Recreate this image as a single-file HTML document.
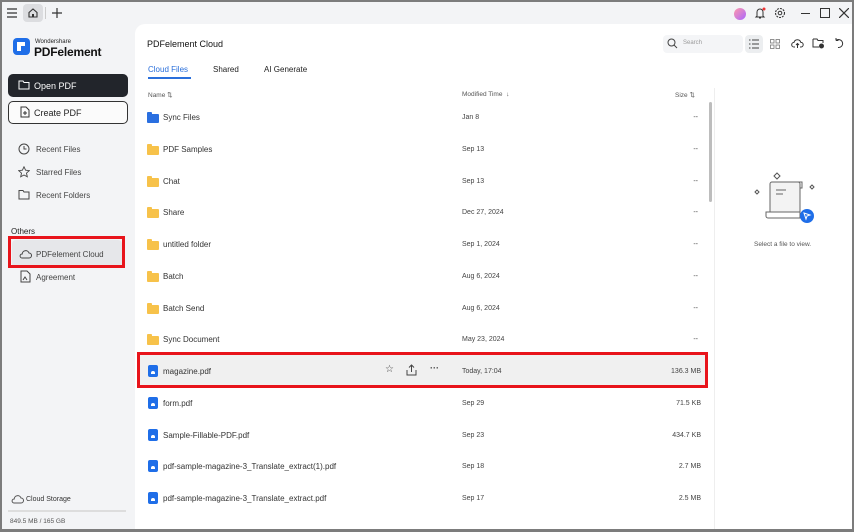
<!DOCTYPE html>
<html><head><meta charset="utf-8"><style>
*{margin:0;padding:0;box-sizing:border-box}
body{width:854px;height:532px;overflow:hidden;background:#7c7c7c;font-family:"Liberation Sans",sans-serif;position:relative}
.win{position:absolute;left:2px;top:2px;width:850px;height:527px;background:#f3f4f6;overflow:hidden}
.a{position:absolute}
.t{font-size:8px;color:#333;white-space:nowrap}
.main{position:absolute;left:133px;top:22px;width:717px;height:505px;background:#fff;border-top-left-radius:10px}
.fold{position:absolute;left:147px;width:12px;height:9px;background:#f7c24a;border-radius:1px}
.fold:before{content:"";position:absolute;left:0;top:-2px;width:5px;height:3px;background:#f7c24a;border-radius:1px 1px 0 0}
.fold.b,.fold.b:before{background:#2a6fe0}
.pdf{position:absolute;left:148px;width:10px;height:12px;background:#1f6ee8;border-radius:2px}
.pdf:after{content:"";position:absolute;left:3px;top:6px;width:4px;height:3px;background:#fff;border-radius:2px 2px 0 0}
.d{position:absolute;left:462px;font-size:7px;color:#444}
.s{position:absolute;right:153px;font-size:7px;color:#444;text-align:right}
.side{font-size:8px;color:#444}
</style></head><body>
<div class="win">
<svg class="a" style="left:4px;top:5px" width="12" height="12" viewBox="0 0 12 12"><path d="M1 2h10M1 6h10M1 10h10" stroke="#333" stroke-width="1.2"/></svg>
<div class="a" style="left:21px;top:2px;width:20px;height:18px;background:#dcdde0;border-radius:4px"></div>
<svg class="a" style="left:25px;top:5px" width="12" height="12" viewBox="0 0 12 12"><path d="M2 5.5L6 2l4 3.5V10H2z" fill="none" stroke="#333" stroke-width="1.1"/><rect x="5" y="7" width="2" height="3" fill="#333"/></svg>
<div class="a" style="left:43px;top:5px;width:1px;height:12px;background:#ccc"></div>
<svg class="a" style="left:49px;top:5px" width="12" height="12"><path d="M6 1v10M1 6h10" stroke="#333" stroke-width="1.2"/></svg>
<div class="a" style="left:732px;top:6px;width:12px;height:12px;border-radius:50%;background:linear-gradient(135deg,#f9a,#a6f)"></div>
<svg class="a" style="left:752px;top:5px" width="12" height="13"><path d="M3 9V5a3 3 0 016 0v4l1 1H2z M5 11h2" fill="none" stroke="#333" stroke-width="1"/><circle cx="10" cy="2" r="1.5" fill="#e33"/></svg>
<svg class="a" style="left:772px;top:5px" width="12" height="12"><circle cx="6" cy="6" r="4.5" fill="none" stroke="#333" stroke-width="1.1" stroke-dasharray="2 1"/><circle cx="6" cy="6" r="1.8" fill="none" stroke="#333"/></svg>
<div class="a" style="left:799px;top:11px;width:9px;height:1px;background:#333"></div>
<div class="a" style="left:818px;top:6px;width:10px;height:10px;border:1.2px solid #333"></div>
<svg class="a" style="left:837px;top:6px" width="10" height="10"><path d="M0 0l10 10M10 0L0 10" stroke="#333" stroke-width="1.2"/></svg>

<div class="a" style="left:11px;top:36px;width:17px;height:17px;background:#1f6ee8;border-radius:4px"></div>
<div class="a" style="left:15px;top:40px;width:8px;height:4px;background:#fff"></div>
<div class="a" style="left:15px;top:44px;width:4px;height:5px;background:#fff"></div>
<div class="a" style="left:33px;top:37px;font-size:6px;color:#222">Wondershare</div>
<div class="a" style="left:32px;top:43px;font-size:12px;color:#111;font-weight:bold;letter-spacing:-.2px">PDFelement</div>
<div class="a" style="left:6px;top:72px;width:120px;height:23px;background:#22252b;border-radius:5px"></div>
<svg class="a" style="left:16px;top:77px" width="12" height="11"><path d="M1 2h4l1 1.5h5V10H1z" fill="none" stroke="#fff" stroke-width="1"/></svg>
<div class="a" style="left:32px;top:79px;font-size:9px;color:#fff">Open PDF</div>
<div class="a" style="left:6px;top:99px;width:120px;height:23px;border:1px solid #333;border-radius:5px;background:#fbfbfb"></div>
<svg class="a" style="left:18px;top:104px" width="10" height="12"><path d="M1 1h5l3 3v7H1z M5 5v4M3 7h4" fill="none" stroke="#333" stroke-width="1"/></svg>
<div class="a" style="left:32px;top:106px;font-size:9px;color:#222">Create PDF</div>
<svg class="a" style="left:16px;top:141px" width="12" height="12"><circle cx="6" cy="6" r="5" fill="none" stroke="#444"/><path d="M6 3v3h2.5" fill="none" stroke="#444"/></svg>
<div class="a side" style="left:34px;top:143px">Recent Files</div>
<svg class="a" style="left:16px;top:164px" width="12" height="12"><path d="M6 .8l1.6 3.4 3.7.4-2.8 2.5.8 3.7L6 9 2.7 10.8l.8-3.7L.7 4.6l3.7-.4z" fill="none" stroke="#444" stroke-width=".9"/></svg>
<div class="a side" style="left:34px;top:166px">Starred Files</div>
<svg class="a" style="left:16px;top:187px" width="12" height="11"><path d="M1 1.5h4l1 1.5h5V10H1z" fill="none" stroke="#444" stroke-width="1"/></svg>
<div class="a side" style="left:34px;top:189px">Recent Folders</div>
<div class="a" style="left:9px;top:225px;font-size:8px;color:#222">Others</div>
<div class="a" style="left:10px;top:238px;width:110px;height:28px;background:#e6e7ea;border-radius:4px"></div>
<svg class="a" style="left:17px;top:247px" width="13" height="10"><path d="M3 9h7a2.5 2.5 0 000-5 3.5 3.5 0 00-6.8 1A2 2 0 003 9z" fill="none" stroke="#444"/></svg>
<div class="a side" style="left:34px;top:248px">PDFelement Cloud</div>
<div class="a" style="left:6px;top:234px;width:117px;height:32px;border:3px solid #e8141b"></div>
<svg class="a" style="left:18px;top:268px" width="11" height="13"><path d="M1 1h6l3 3v8H1z M3 10l2-3 2 3" fill="none" stroke="#444"/></svg>
<div class="a side" style="left:34px;top:271px">Agreement</div>
<svg class="a" style="left:9px;top:492px" width="13" height="10"><path d="M3 9h7a2.5 2.5 0 000-5 3.5 3.5 0 00-6.8 1A2 2 0 003 9z" fill="none" stroke="#555"/></svg>
<div class="a" style="left:24px;top:494px;font-size:7px;color:#333">Cloud Storage</div>
<div class="a" style="left:6px;top:508px;width:118px;height:2px;background:#ddd"></div>
<div class="a" style="left:8px;top:516px;font-size:6.5px;color:#555">849.5 MB / 165 GB</div>

<div class="main"></div>
</div>
<div class="a" style="left:147px;top:39px;font-size:9px;color:#111">PDFelement Cloud</div>
<div class="a" style="left:148px;top:65px;font-size:8px;color:#2a6fdb">Cloud Files</div>
<div class="a" style="left:148px;top:77px;width:43px;height:1.5px;background:#2a6fdb"></div>
<div class="a" style="left:213px;top:65px;font-size:8px;color:#222">Shared</div>
<div class="a" style="left:264px;top:65px;font-size:8px;color:#222">AI Generate</div>
<div class="a" style="left:663px;top:35px;width:80px;height:18px;background:#f4f5f7;border-radius:4px"></div>
<svg class="a" style="left:667px;top:38px" width="11" height="11"><circle cx="4.5" cy="4.5" r="3.5" fill="none" stroke="#444"/><path d="M7 7l3 3" stroke="#444"/></svg>
<div class="a" style="left:683px;top:40px;font-size:6px;color:#999">Search</div>
<div class="a" style="left:745px;top:35px;width:18px;height:18px;background:#eceef0;border-radius:4px"></div>
<svg class="a" style="left:749px;top:39px" width="10" height="10"><path d="M0 1h1.5M3 1h7M0 5h1.5M3 5h7M0 9h1.5M3 9h7" stroke="#444"/></svg>
<svg class="a" style="left:770px;top:39px" width="10" height="10"><g fill="none" stroke="#777" stroke-width=".8"><rect x=".5" y=".5" width="3.5" height="3.5"/><rect x="6" y=".5" width="3.5" height="3.5"/><rect x=".5" y="6" width="3.5" height="3.5"/><rect x="6" y="6" width="3.5" height="3.5"/></g></svg>
<svg class="a" style="left:791px;top:38px" width="13" height="11"><path d="M4 9H3a2.3 2.3 0 010-4.6 3.5 3.5 0 016.8 0A2.3 2.3 0 0110 9H9M6.5 10V5.5M5 7l1.5-1.5L8 7" fill="none" stroke="#333"/></svg>
<svg class="a" style="left:812px;top:37px" width="13" height="12"><path d="M1 2h4l1 1.5h5V6M7 10H1V2" fill="none" stroke="#333"/><circle cx="9.5" cy="9" r="2.5" fill="#333"/></svg>
<svg class="a" style="left:833px;top:38px" width="11" height="11"><path d="M3 2.5A4 4 0 115 9.5M3 2.5V0M3 2.5H5.5" fill="none" stroke="#333"/></svg>

<div class="a" style="left:148px;top:91px;font-size:6.5px;color:#555">Name &#8645;</div>
<div class="a" style="left:462px;top:91px;font-size:6.5px;color:#555">Modified Time &nbsp;&#8595;</div>
<div class="a" style="left:675px;top:91px;font-size:6.5px;color:#555">Size &#8645;</div>
<div class="a" style="left:709px;top:102px;width:3px;height:100px;background:#bdbdbd;border-radius:2px"></div>
<div class="a" style="left:714px;top:88px;width:1px;height:441px;background:#eee"></div>

<div class="a" style="left:139px;top:355px;width:567px;height:31px;background:#f0f0f0"></div>
<div class="a" style="left:137px;top:352px;width:571px;height:36px;border:3px solid #e8141b"></div>

<div class="fold b" style="top:114px"></div>
<div class="a t" style="left:163px;top:113px">Sync Files</div><div class="d" style="top:114px">Jan 8</div><div class="s" style="right:156px;top:114px">--</div>
<div class="fold" style="top:146px"></div><div class="a t" style="left:163px;top:145px">PDF Samples</div><div class="d" style="top:146px">Sep 13</div><div class="s" style="right:156px;top:146px">--</div>
<div class="fold" style="top:178px"></div><div class="a t" style="left:163px;top:177px">Chat</div><div class="d" style="top:178px">Sep 13</div><div class="s" style="right:156px;top:178px">--</div>
<div class="fold" style="top:209px"></div><div class="a t" style="left:163px;top:208px">Share</div><div class="d" style="top:209px">Dec 27, 2024</div><div class="s" style="right:156px;top:209px">--</div>
<div class="fold" style="top:241px"></div><div class="a t" style="left:163px;top:240px">untitled folder</div><div class="d" style="top:241px">Sep 1, 2024</div><div class="s" style="right:156px;top:241px">--</div>
<div class="fold" style="top:273px"></div><div class="a t" style="left:163px;top:272px">Batch</div><div class="d" style="top:273px">Aug 6, 2024</div><div class="s" style="right:156px;top:273px">--</div>
<div class="fold" style="top:305px"></div><div class="a t" style="left:163px;top:304px">Batch Send</div><div class="d" style="top:305px">Aug 6, 2024</div><div class="s" style="right:156px;top:305px">--</div>
<div class="fold" style="top:336px"></div><div class="a t" style="left:163px;top:335px">Sync Document</div><div class="d" style="top:336px">May 23, 2024</div><div class="s" style="right:156px;top:336px">--</div>

<div class="pdf" style="top:365px"></div><div class="a t" style="left:163px;top:367px">magazine.pdf</div>
<div class="a" style="left:385px;top:364px;font-size:10px;color:#444">&#9734;</div>
<svg class="a" style="left:406px;top:364px" width="11" height="12"><path d="M5.5 8V1M3 3.5L5.5 1 8 3.5M1 6v5h9V6" fill="none" stroke="#444"/></svg>
<div class="a" style="left:430px;top:363px;font-size:9px;color:#444;font-weight:bold">&middot;&middot;&middot;</div>
<div class="d" style="top:368px">Today, 17:04</div><div class="s" style="top:368px">136.3 MB</div>
<div class="pdf" style="top:397px"></div><div class="a t" style="left:163px;top:399px">form.pdf</div><div class="d" style="top:400px">Sep 29</div><div class="s" style="top:400px">71.5 KB</div>
<div class="pdf" style="top:429px"></div><div class="a t" style="left:163px;top:431px">Sample-Fillable-PDF.pdf</div><div class="d" style="top:432px">Sep 23</div><div class="s" style="top:432px">434.7 KB</div>
<div class="pdf" style="top:460px"></div><div class="a t" style="left:163px;top:462px">pdf-sample-magazine-3_Translate_extract(1).pdf</div><div class="d" style="top:463px">Sep 18</div><div class="s" style="top:463px">2.7 MB</div>
<div class="pdf" style="top:492px"></div><div class="a t" style="left:163px;top:494px">pdf-sample-magazine-3_Translate_extract.pdf</div><div class="d" style="top:495px">Sep 17</div><div class="s" style="top:495px">2.5 MB</div>

<svg class="a" style="left:750px;top:168px" width="72" height="58" viewBox="0 0 72 58">
<path d="M24 8l3-3 3 3-3 3z" fill="none" stroke="#555"/>
<path d="M5 24l2-2 2 2-2 2z" fill="none" stroke="#555"/>
<path d="M60 19l2-2 2 2-2 2z" fill="none" stroke="#555"/>
<rect x="20" y="14" width="30" height="34" rx="2" fill="#f3f3f3" stroke="#666"/>
<path d="M26 22h10M26 26h7" stroke="#666"/>
<path d="M48 14h4v6h-2" fill="none" stroke="#666"/>
<path d="M16 44h34v6H18a2 2 0 01-2-2z" fill="#fff" stroke="#666"/>
<circle cx="57" cy="48" r="7" fill="#1f6ee8"/>
<path d="M54 45l6 2-3 1-1 3z" fill="none" stroke="#fff"/>
</svg>
<div class="a" style="left:754px;top:241px;font-size:6.5px;color:#555">Select a file to view.</div>
</body></html>
